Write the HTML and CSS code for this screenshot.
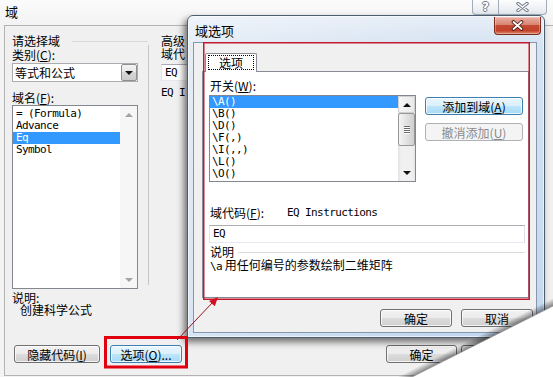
FILE: index.html
```html
<!DOCTYPE html>
<html lang="zh-CN">
<head>
  <meta charset="UTF-8">
  <meta name="viewport" content="width=device-width, initial-scale=1.0">
  <title>域</title>
  <link rel="stylesheet" href="styles.css">
</head>
<body>
  <div class="main">
    <div class="main-title">
      <span class="title-text">域</span>
      <div class="caps">
        <span class="cap cap-help">?</span>
        <span class="cap cap-close">
          <svg width="13" height="10" viewBox="0 0 13 10">
            <path d="M2 1.5 L11 8.5 M11 1.5 L2 8.5" stroke="#6f7986" stroke-width="3.4" stroke-linecap="round"/>
            <path d="M2 1.5 L11 8.5 M11 1.5 L2 8.5" stroke="#fff" stroke-width="1.5" stroke-linecap="round"/>
          </svg>
        </span>
      </div>
    </div>

    <div class="main-client">
      <div class="main-body">
        <div class="col-left">
          <div class="group-head"><span>请选择域</span><i class="rule"></i></div>
          <div class="lbl gap2">类别(<u>C</u>):</div>
          <div class="combo">
            <span class="combo-text">等式和公式</span>
            <span class="combo-btn"><i class="tri-down"></i></span>
          </div>
          <div class="lbl gap10">域名(<u>F</u>):</div>
          <div class="listbox field-list">
            <ul class="items">
              <li>= (Formula)</li>
              <li>Advance</li>
              <li class="sel">Eq</li>
              <li>Symbol</li>
            </ul>
            <div class="vscroll off">
              <span class="arrow"><i class="tri-up"></i></span>
              <span class="track"></span>
              <span class="arrow"><i class="tri-down"></i></span>
            </div>
          </div>
          <div class="lbl gap3">说明:</div>
          <div class="lbl indent">创建科学公式</div>
        </div>
        <i class="col-sep"></i>
        <div class="col-right">
          <div class="lbl">高级</div>
          <div class="lbl gap1">域代</div>
          <div class="textbox mono adv-box">EQ</div>
          <div class="lbl mono gap6">EQ I</div>
        </div>
      </div>

      <div class="main-foot">
        <button class="btn btn-hide">隐藏代码(<u>I</u>)</button>
        <button class="btn btn-default btn-opt">选项(<u>O</u>)...</button>
        <button class="btn btn-ok">确定</button>
        <button class="btn btn-cancel">取消</button>
      </div>
    </div>
  </div>

  <div class="opt">
    <div class="opt-title">
      <span class="title-text">域选项</span>
      <span class="close-btn">
        <svg width="13" height="11" viewBox="0 0 13 11">
          <path d="M2.5 2 L10.5 9 M10.5 2 L2.5 9" stroke="#4a1a12" stroke-width="3.6" stroke-linecap="round"/>
          <path d="M2.5 2 L10.5 9 M10.5 2 L2.5 9" stroke="#fff" stroke-width="1.8" stroke-linecap="round"/>
        </svg>
      </span>
    </div>

    <div class="opt-client">
      <div class="tabs">
        <div class="tab-strip">
          <span class="tab"><span class="focus">选项</span></span>
        </div>
        <div class="tab-page">
          <div class="lbl pad1">开关(<u>W</u>):</div>
          <div class="switch-row">
            <div class="listbox switch-list">
              <ul class="items">
                <li class="sel">\A()</li>
                <li>\B()</li>
                <li>\D()</li>
                <li>\F(,)</li>
                <li>\I(,,)</li>
                <li>\L()</li>
                <li>\O()</li>
              </ul>
              <div class="vscroll">
                <span class="arrow btnish"><i class="tri-up"></i></span>
                <span class="thumb"><i></i><i></i><i></i><i></i></span>
                <span class="track"></span>
                <span class="arrow"><i class="tri-down"></i></span>
              </div>
            </div>
            <div class="switch-btns">
              <button class="btn btn-default">添加到域(<u>A</u>)</button>
              <button class="btn" disabled>撤消添加(<u>U</u>)</button>
            </div>
          </div>
          <div class="code-line">
            <span class="code-lbl">域代码(<u>F</u>):</span>
            <span class="mono">EQ Instructions</span>
          </div>
          <div class="textbox mono code-input">EQ</div>
          <div class="group-head desc-head"><span>说明</span><i class="rule"></i></div>
          <div class="lbl pad1 gap1"><span class="mono">\a</span> 用任何编号的参数绘制二维矩阵</div>
        </div>
      </div>

      <div class="opt-foot">
        <button class="btn">确定</button>
        <button class="btn">取消</button>
      </div>
    </div>
  </div>

  <svg class="marks" width="553" height="377" viewBox="0 0 553 377">
    <defs>
      <linearGradient id="curlShade" gradientUnits="userSpaceOnUse" x1="479.3" y1="335.2" x2="482.5" y2="341.5">
        <stop offset="0" stop-color="#000" stop-opacity="0"/>
        <stop offset="1" stop-color="#000" stop-opacity="0.45"/>
      </linearGradient>
    </defs>
    <rect x="203.75" y="42.75" width="325.5" height="256.5" fill="none" stroke="#c41a30" stroke-width="1.5"/>
    <rect x="105.5" y="337.5" width="81" height="29.5" fill="none" stroke="#e0000f" stroke-width="3"/>
    <line x1="177" y1="340" x2="213" y2="302" stroke="#a0101c" stroke-width="1"/>
    <polygon points="218,297 214.8,306.3 209,300.9" fill="#d40f1e"/>
    <polygon points="553,298.2 553,306 412,377 396.4,377" fill="url(#curlShade)"/>
    <polygon points="553,306 553,377 412,377" fill="#fff"/>
    <line x1="553" y1="306" x2="412" y2="377" stroke="#8a8a8a" stroke-width="0.8"/>
  </svg>
</body>
</html>
```

FILE: styles.css
```css
body {
  margin: 0;
  width: 553px;
  height: 377px;
  overflow: hidden;
  position: relative;
  background: #fff;
  font-family: "Noto Sans CJK SC", sans-serif;
  font-size: 12px;
  line-height: 12px;
  color: #000;
}
u {
  text-decoration: underline;
  text-underline-offset: 1px;
}
.mono {
  font-family: "DejaVu Sans Mono", monospace;
  font-size: 11px;
  letter-spacing: -0.6px;
}
.lbl {
  height: 12px;
  white-space: nowrap;
}
.gap1 { margin-top: 1px; }
.gap2 { margin-top: 2px; }
.gap3 { margin-top: 3px; }
.gap6 { margin-top: 6px; }
.gap10 { margin-top: 10px; }
.indent { padding-left: 8px; }
.pad1 { padding-left: 1px; }

/* main window */
.main {
  width: 553px;
  height: 377px;
  box-sizing: border-box;
  padding: 0 0 1px 4px;
  background: linear-gradient(#fbfbfb, #f3f3f3 25px, #f3f3f3);
  display: flex;
  flex-direction: column;
}
.main-title {
  height: 25px;
  display: flex;
  align-items: flex-start;
}
.title-text {
  font-size: 13px;
  line-height: 14px;
}
.main-title .title-text {
  margin: 5px 0 0 1px;
}
.caps {
  margin-left: auto;
  margin-right: 6px;
  display: flex;
}
.cap {
  height: 15px;
  box-sizing: border-box;
  border: 1px solid #a2acb8;
  border-top: none;
  background: linear-gradient(#fdfdfd, #e4e9ef);
  display: flex;
  align-items: center;
  justify-content: center;
}
.cap-help {
  width: 26px;
  border-right: none;
  border-radius: 0 0 0 4px;
  font: bold 12px/12px "DejaVu Sans", sans-serif;
  color: #fff;
  text-shadow: 1px 0 #6f7986, -1px 0 #6f7986, 0 1px #6f7986, 0 -1px #6f7986;
}
.cap-close {
  width: 49px;
  border-radius: 0 0 4px 0;
}
.main-client {
  flex: 1;
  display: flex;
  flex-direction: column;
  border: 1px solid #b3b3b3;
  border-right: none;
  background: #f0f0f0;
  padding: 9px 0 12px 7px;
}
.main-body {
  display: flex;
}
.col-left {
  width: 136px;
}
.col-sep {
  width: 1px;
  height: 240px;
  margin-top: 10px;
  background: #c6c6c6;
}
/* only the strip left of the options dialog is visible */
.col-right {
  margin-left: 12px;
  width: 26px;
  overflow: hidden;
}
.group-head {
  display: flex;
  align-items: center;
  height: 12px;
}
.group-head .rule {
  flex: 1;
  height: 1px;
  margin-left: 12px;
  background: #d5d9dd;
}
.combo {
  margin-top: 2px;
  width: 126px;
  height: 19px;
  box-sizing: border-box;
  border: 1px solid #abadb3;
  background: #fff;
  display: flex;
}
.combo-text {
  flex: 1;
  padding: 3px 0 0 2px;
}
.combo-btn {
  width: 16px;
  box-sizing: border-box;
  border: 1px solid #8f8f8f;
  border-radius: 2px;
  background: linear-gradient(#f4f4f4, #e6e6e6 50%, #d6d6d6 50%, #cbcbcb);
  display: flex;
  align-items: center;
  justify-content: center;
}
.tri-down, .tri-up {
  width: 0;
  height: 0;
  border-left: 4px solid transparent;
  border-right: 4px solid transparent;
}
.tri-down { border-top: 4px solid #111; }
.tri-up { border-bottom: 4px solid #111; }

.listbox {
  display: flex;
  box-sizing: border-box;
  border: 1px solid #828790;
  background: #fff;
}
.items {
  list-style: none;
  margin: 0;
  padding: 0;
  flex: 1;
  font: 11px/12px "DejaVu Sans Mono", monospace;
  letter-spacing: -0.6px;
}
.items li {
  height: 12px;
  padding-left: 3px;
  white-space: pre;
}
.items li.sel {
  background: #3399ff;
  color: #fff;
}
.field-list {
  margin-top: 1px;
  width: 126px;
  height: 184px;
}
.field-list .items {
  padding-top: 2px;
}
.vscroll {
  width: 17px;
  display: flex;
  flex-direction: column;
  background: linear-gradient(90deg, #e2e2e2, #f0f0f0 3px, #f0f0f0 14px, #e6e6e6);
}
.vscroll.off {
  background: #f6f6f6;
}
.vscroll.off .tri-up { border-bottom-color: #a3a3a3; }
.vscroll.off .tri-down { border-top-color: #a3a3a3; }
.arrow {
  height: 17px;
  display: flex;
  align-items: center;
  justify-content: center;
}
.arrow.btnish {
  box-sizing: border-box;
  border: 1px solid #d0d0d0;
  border-radius: 2px;
  background: linear-gradient(90deg, #f6f6f6, #e9e9e9);
}
.track {
  flex: 1;
}
.thumb {
  height: 33px;
  box-sizing: border-box;
  border: 1px solid #979797;
  border-radius: 2px;
  background: linear-gradient(90deg, #f4f4f4, #e2e2e2 50%, #cfcfcf);
  display: flex;
  flex-direction: column;
  align-items: center;
  justify-content: center;
  gap: 1px;
}
.thumb i {
  width: 6px;
  height: 1px;
  background: #6a6a6a;
  box-shadow: 0 1px #fff;
}

.textbox {
  box-sizing: border-box;
  border: 1px solid #abadb3;
  border-left-color: #e2e3ea;
  border-right-color: #dbdfe6;
  border-bottom-color: #e3e9ef;
  background: #fff;
  padding: 2px 0 0 3px;
  line-height: 12px;
}
.adv-box {
  margin-top: 4px;
  width: 40px;
  height: 17px;
}

.btn {
  box-sizing: border-box;
  height: 18px;
  padding: 0;
  border: 1px solid #707070;
  border-radius: 3px;
  background: linear-gradient(#f2f2f2, #ebebeb 50%, #dddddd 50%, #cfcfcf);
  box-shadow: inset 0 0 0 1px rgba(255, 255, 255, 0.75);
  font: 12px/15px "Noto Sans CJK SC", sans-serif;
  color: #000;
  white-space: nowrap;
}
.btn-default {
  border-color: #3c7fb1;
  background: linear-gradient(#eaf6fd, #d9f0fc 50%, #bee6fd 50%, #a7d9f5);
}
.btn:disabled {
  border-color: #adb2b5;
  background: #f4f4f4;
  box-shadow: none;
  color: #8a8a8a;
}
.main-foot {
  margin-top: auto;
  display: flex;
  padding-left: 2px;
}
.btn-hide { width: 86px; }
.btn-opt { width: 72px; margin-left: 10px; }
.btn-ok { width: 71px; margin-left: 204px; }
.btn-cancel { width: 72px; margin-left: 4px; }

/* options dialog */
.opt {
  position: absolute;
  left: 187px;
  top: 15px;
  width: 358px;
  height: 323px;
  box-sizing: border-box;
  border: 1px solid #4d5d70;
  border-radius: 6px 6px 0 0;
  padding: 0 7px 4px 5px;
  display: flex;
  flex-direction: column;
  background:
    linear-gradient(90deg, rgba(255, 255, 255, 0.35), rgba(255, 255, 255, 0) 70%),
    linear-gradient(#e7eef7, #d6e3f2 30px, #c3d7ee);
  box-shadow: -3px 4px 7px rgba(0, 0, 0, 0.55), inset 0 0 0 1px rgba(255, 255, 255, 0.6);
}
.opt-title {
  height: 26px;
  display: flex;
  align-items: flex-start;
}
.opt-title .title-text {
  margin: 8px 0 0 2px;
}
.close-btn {
  margin: 1px -4px 0 auto;
  width: 47px;
  height: 18px;
  box-sizing: border-box;
  border: 1px solid #7b2a1c;
  border-top: none;
  border-radius: 0 0 4px 4px;
  background: linear-gradient(#eab0a3, #d98574 45%, #c34a33 50%, #c3422a 80%, #dd8a6e);
  box-shadow: inset 0 0 0 1px rgba(255, 255, 255, 0.3);
  display: flex;
  align-items: center;
  justify-content: center;
}
.opt-client {
  flex: 1;
  border: 1px solid #8497ae;
  background: #f0f0f0;
  padding: 10px 3px 0 8px;
  display: flex;
  flex-direction: column;
}
.tabs {
  width: 327px;
}
.tab-strip {
  display: flex;
  height: 19px;
  padding-left: 3px;
}
.tab {
  position: relative;
  z-index: 1;
  width: 52px;
  height: 19px;
  box-sizing: border-box;
  border: 1px solid #898c95;
  border-bottom: none;
  border-radius: 2px 2px 0 0;
  background: #fff;
}
.tab .focus {
  display: block;
  box-sizing: border-box;
  width: 46px;
  height: 15px;
  margin: 1px 0 0 2px;
  border: 1px dotted #000;
  text-align: center;
  line-height: 13px;
}
.tab-page {
  margin-top: -1px;
  height: 227px;
  box-sizing: border-box;
  border: 1px solid #898c95;
  background: #fff;
  padding: 8px 3px 0 6px;
}
.switch-row {
  display: flex;
  align-items: flex-start;
  margin-top: 3px;
}
.switch-list {
  width: 207px;
  height: 87px;
}
.switch-list .items li {
  padding-left: 2px;
}
.switch-btns {
  display: flex;
  flex-direction: column;
  gap: 8px;
  margin-left: 9px;
  padding-top: 2px;
}
.switch-btns .btn {
  width: 98px;
}
.code-line {
  display: flex;
  height: 12px;
  margin-top: 25px;
  padding-left: 1px;
}
.code-lbl {
  width: 77px;
}
.code-line .mono {
  line-height: 12px;
}
.code-input {
  margin-top: 6px;
  width: 316px;
  height: 18px;
}
.desc-head {
  margin-top: 3px;
  padding-left: 1px;
}
.desc-head .rule {
  margin-left: 4px;
  background: #dcdcdc;
}
.opt-foot {
  display: flex;
  justify-content: flex-end;
  gap: 9px;
  margin-top: 11px;
}
.opt-foot .btn {
  width: 72px;
}

/* annotation layer: red marks and the page curl */
.marks {
  position: absolute;
  left: 0;
  top: 0;
  pointer-events: none;
}
```
